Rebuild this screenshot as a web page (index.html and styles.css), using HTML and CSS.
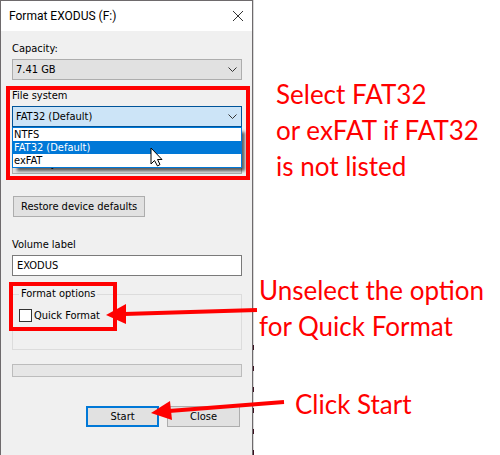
FILE: index.html
```
<!DOCTYPE html>
<html lang="en">
<head>
    <meta charset="UTF-8">
    <meta name="viewport" content="width=device-width, initial-scale=1.0">
    <title>Format EXODUS (F:)</title>

    <link rel="stylesheet" href="styles.css">
</head>
<body>

    <main class="guide">
        <div class="backdrop">
            <form class="dialog">
                <header class="titlebar">
                    <h1>Format EXODUS (F:)</h1>
                    <button type="button" class="close-icon" aria-label="Close window">
                        <svg width="10" height="10" viewBox="0 0 10 10"><path d="M0 0L10 10M10 0L0 10"/></svg>
                    </button>
                </header>

                <div class="content">
                    <div class="field">
                        <label for="capacity">Capacity:</label>
                        <div class="combo">
                            <select id="capacity" name="capacity">
                                <option>7.41 GB</option>
                            </select>
                            <svg class="arrow" width="9" height="6" viewBox="0 0 9 6"><path d="M0.5 0.5L4.5 4.5L8.5 0.5"/></svg>
                        </div>
                    </div>

                    <div class="field">
                        <label for="fileSystem">File system</label>
                        <div class="combo open">
                            <select id="fileSystem" name="fileSystem">
                                <option>FAT32 (Default)</option>
                            </select>
                            <svg class="arrow" width="9" height="6" viewBox="0 0 9 6"><path d="M0.5 0.5L4.5 4.5L8.5 0.5"/></svg>
                            <ul class="options">
                                <li>NTFS</li>
                                <li class="selected">FAT32 (Default)</li>
                                <li>exFAT</li>
                            </ul>
                            <svg class="cursor" width="13" height="20" viewBox="0 0 13 20"><path d="M1 1V17L4.500 13.500L7.500 19L10 17.500L7.500 12.500H12Z"/></svg>
                        </div>
                        <div class="highlight highlight-system"></div>
                    </div>

                    <div class="combo allocation">
                        <select name="allocation" aria-label="Allocation unit size">
                            <option>4096 bytes</option>
                        </select>
                    </div>

                    <button type="button" class="restore">Restore device defaults</button>

                    <div class="field volume">
                        <label for="volumeLabel">Volume label</label>
                        <input type="text" id="volumeLabel" name="volumeLabel" value="EXODUS">
                    </div>

                    <fieldset>
                        <legend>Format options</legend>
                        <div class="check">
                            <input type="checkbox" id="quickFormat" name="quickFormat">
                            <label for="quickFormat">Quick Format</label>
                        </div>
                        <div class="highlight highlight-options"></div>
                        <svg class="pointer pointer-options" width="152" height="22" viewBox="0 0 152 22">
                            <path class="line" d="M18 11L151 7"/>
                            <path class="head" d="M0 12L20 1V21Z"/>
                        </svg>
                    </fieldset>

                    <div class="progress" role="progressbar" aria-label="Format progress"></div>

                    <div class="actions">
                        <button type="button" class="start">Start</button>
                        <button type="button">Close</button>
                        <svg class="pointer pointer-start" width="134" height="22" viewBox="0 0 134 22">
                            <path class="line" d="M18 12L133 3"/>
                            <path class="head" d="M0 14L19 2L21 21Z"/>
                        </svg>
                    </div>
                </div>
            </form>
        </div>

        <section class="notes">
            <p class="note-system">Select FAT32<br>or exFAT if FAT32<br>is not listed</p>
            <p class="note-options">Unselect the option<br>for Quick Format</p>
            <p class="note-start">Click Start</p>
        </section>
    </main>

</body>
</html>
```
FILE: styles.css
```
* {
    box-sizing: border-box;
}

body {
    margin: 0;
    background-color: white;
    color: black;
    font-family: "DejaVu Sans Condensed", "DejaVu Sans", sans-serif;
    font-size: 11px;
    font-stretch: condensed;
}

.guide {
    display: grid;
    grid-template-columns: 254fr 246fr;
    min-height: 100vh;
    overflow: hidden;
}

/* sliver of the desktop behind the dialog */
.backdrop {
    display: grid;
    padding-right: 1px;
    background:
        linear-gradient(#d8d8d8 0 340px, transparent 340px),
        repeating-linear-gradient(#d8d8d8 0 9px, #3a1020 9px 14px, #d8d8d8 14px 21px);
}

.dialog {
    border: 1px solid #6e6a6c;
    border-bottom: none;
    background-color: #f0f0f0;
}

.titlebar {
    display: flex;
    justify-content: space-between;
    align-items: center;
    height: 30px;
    padding: 0 9px 0 8px;
    background-color: white;
}

h1 {
    margin: 0;
    font-family: Roboto, sans-serif;
    font-size: 12px;
    font-weight: normal;
    font-stretch: normal;
}

button, input, select {
    font: inherit;
    color: inherit;
}

.close-icon {
    display: flex;
    width: 10px;
    height: 10px;
    padding: 0;
    border: none;
    background: none;
}

.close-icon path, .arrow path {
    fill: none;
    stroke: #333;
}

.content {
    display: flex;
    flex-direction: column;
    padding: 10px 10px 28px 11px;
}

.field {
    position: relative;
    display: flex;
    flex-direction: column;
    gap: 2px;
    margin-bottom: 8px;
}

.field label {
    line-height: 16px;
}

.combo {
    position: relative;
    display: flex;
}

.combo select {
    appearance: none;
    width: 100%;
    height: 21px;
    padding: 0 3px;
    border: 1px solid #adadad;
    border-radius: 0;
    background-color: #e1e1e1;
}

.combo.open select {
    border-color: #005499;
    background-color: #cce4f7;
}

.arrow {
    position: absolute;
    right: 5px;
    top: 8px;
}

.options {
    position: absolute;
    z-index: 1;
    top: 100%;
    left: 0;
    right: 0;
    margin: 0;
    padding: 0 0 0 1px;
    border: 1px solid #0078d7;
    background-color: white;
    box-shadow: 4px 4px 3px -1px rgba(0, 0, 0, 0.6);
    list-style: none;
    line-height: 13px;
}

.options .selected {
    margin-left: -1px;
    padding-left: 1px;
    background-color: #0078d7;
    color: white;
}

.cursor {
    position: absolute;
    z-index: 2;
    left: 60%;
    top: 41px;
    fill: white;
    stroke: black;
}

.highlight {
    position: absolute;
    z-index: 3;
    border: 4px solid red;
    pointer-events: none;
}

.highlight-system {
    top: -2px;
    left: -6px;
    right: -8px;
    height: 94px;
}

.allocation {
    margin-top: 18px;
}

.restore {
    align-self: flex-start;
    margin: 22px 0 20px 1px;
}

button {
    height: 21px;
    padding: 0 7px;
    border: 1px solid #adadad;
    background-color: #e1e1e1;
}

.volume {
    margin-bottom: 10px;
}

.volume input {
    height: 21px;
    padding: 0 4px;
    border: 1px solid #7a7a7a;
    background-color: white;
}

fieldset {
    position: relative;
    min-width: 0;
    height: 64px;
    margin: 0 0 14px;
    padding: 7px 6px;
    border: 1px solid #dcdcdc;
}

legend {
    padding: 0 2px;
    line-height: 16px;
}

.check {
    display: flex;
    align-items: center;
    gap: 2px;
}

.check input {
    appearance: none;
    width: 13px;
    height: 13px;
    margin: 0;
    border: 1px solid #333;
    background-color: white;
}

.highlight-options {
    top: -20px;
    left: -4px;
    width: 108px;
    height: 49px;
}

.pointer {
    position: absolute;
    z-index: 4;
    pointer-events: none;
}

.pointer .line {
    stroke: red;
    stroke-width: 4;
}

.pointer .head {
    fill: red;
}

.pointer-options {
    left: 93px;
    top: 1px;
}

.progress {
    height: 13px;
    margin-bottom: 29px;
    border: 1px solid #bcbcbc;
    background-color: #e6e6e6;
}

.actions {
    position: relative;
    display: flex;
    justify-content: flex-end;
    gap: 8px;
    padding-right: 2px;
}

.actions button {
    width: 73px;
}

.actions .start {
    border: 2px solid #0078d7;
}

.pointer-start {
    left: 139px;
    top: -7px;
}

.notes {
    color: red;
    font-family: Lato, sans-serif;
    font-size: 26px;
    font-stretch: normal;
    line-height: 36px;
    white-space: nowrap;
}

.notes p {
    margin: 0;
}

.note-system {
    padding: 76px 0 0 22px;
}

.note-options {
    padding: 88px 0 0 5px;
}

.note-start {
    padding: 42px 0 0 41px;
}
```
